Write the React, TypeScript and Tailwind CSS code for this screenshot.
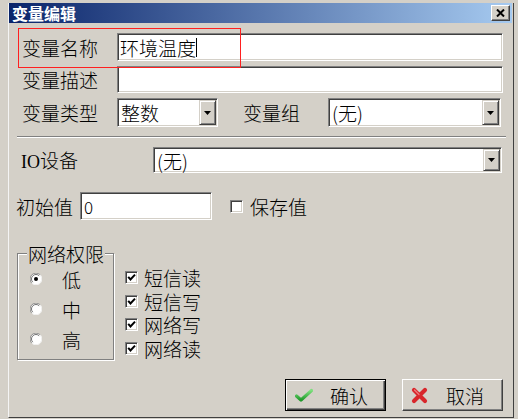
import React from "react";

const sunken =
  "border border-t-[#808080] border-l-[#808080] border-b-white border-r-white bg-white shadow-[inset_1px_1px_0_#404040,inset_-1px_-1px_0_#d4d0c8]";

function DropBtn() {
  return (
    <div className="w-[17px] h-full flex items-center justify-center bg-[#d4d0c8] border border-t-[#d4d0c8] border-l-[#d4d0c8] border-b-[#404040] border-r-[#404040] shadow-[inset_1px_1px_0_#ffffff,inset_-1px_-1px_0_#808080]">
      <svg width="7" height="4" viewBox="0 0 7 4">
        <path d="M0 0H7L3.5 4Z" fill="#000" />
      </svg>
    </div>
  );
}

function Select({ value, className }: { value: string; className: string }) {
  return (
    <div className={`${sunken} ${className} flex items-stretch p-[1px]`}>
      <div className="flex-1 flex items-center pl-[2px] text-[19px] leading-none">{value}</div>
      <DropBtn />
    </div>
  );
}

function Radio({ checked }: { checked?: boolean }) {
  return (
    <svg width="12" height="12" viewBox="0 0 12 12">
      <circle cx="6" cy="6" r="5.5" fill="#fff" />
      <path d="M10.2 1.8A5.5 5.5 0 0 0 1.8 10.2" fill="none" stroke="#909090" strokeWidth="1" />
      <path d="M9.2 2.8A4.2 4.2 0 0 0 2.8 9.2" fill="none" stroke="#505050" strokeWidth="0.8" />
      <path d="M1.8 10.2A5.5 5.5 0 0 0 10.2 1.8" fill="none" stroke="#f4f4f4" strokeWidth="1" />
      {checked && <circle cx="6" cy="6" r="2" fill="#000" />}
    </svg>
  );
}

function Check({ checked }: { checked?: boolean }) {
  return (
    <div className="w-[13px] h-[13px] bg-white border border-t-[#808080] border-l-[#808080] border-b-white border-r-white shadow-[inset_1px_1px_0_#404040,inset_-1px_-1px_0_#d4d0c8] flex items-center justify-center">
      {checked && (
        <svg width="9" height="9" viewBox="0 0 9 9">
          <path d="M1.2 3.8 L3.5 6.5 L8 1.6" fill="none" stroke="#000" strokeWidth="2" />
        </svg>
      )}
    </div>
  );
}

export default function App() {
  return (
    <div className="w-[518px] h-[419px] bg-[#d4d0c8] overflow-hidden pt-[3px] pl-[8px] font-['Noto_Sans_CJK_SC',sans-serif] font-light text-black">
      <div className="w-[506px] h-[415px] border-l border-l-[#f4f4f4] border-r border-r-[#404040] border-b border-b-[#404040] pr-[1px] flex flex-col">
        {/* title bar */}
        <div className="w-[503px] h-[20px] flex items-center justify-between bg-[linear-gradient(90deg,#0a246a,#a6caf0)]">
          <span className="pl-[3px] text-white font-bold text-[16px] leading-none">变量编辑</span>
          <div className="mr-[2px] w-[19px] h-[16px] bg-[#d4d0c8] border border-t-white border-l-white border-b-[#404040] border-r-[#404040] shadow-[inset_-1px_-1px_0_#808080] flex items-center justify-center">
            <svg width="9" height="8" viewBox="0 0 9 8">
              <path d="M1 0.5 L8 7.5 M8 0.5 L1 7.5" stroke="#000" strokeWidth="2" />
            </svg>
          </div>
        </div>

        {/* body */}
        <div className="relative flex flex-col text-[19px] leading-none">
          {/* red annotation box */}
          <div className="absolute left-[9px] top-[5px] w-[223px] h-[40px] border border-[#ff2020] pointer-events-none" />

          {/* row 1 */}
          <div className="mt-[10px] h-[28px] flex items-center">
            <div className="w-[108px] pl-[13px]">变量名称</div>
            <div className={`${sunken} w-[386px] h-full flex items-center pl-[2px]`}>
              <span>环境温度</span>
              <span className="inline-block w-[1px] h-[19px] bg-black" />
            </div>
          </div>

          {/* row 2 */}
          <div className="mt-[5px] h-[27px] flex items-center">
            <div className="w-[108px] pl-[13px]">变量描述</div>
            <div className={`${sunken} w-[386px] h-full`} />
          </div>

          {/* row 3 */}
          <div className="mt-[5px] h-[29px] flex items-center">
            <div className="w-[108px] pl-[13px]">变量类型</div>
            <Select value="整数" className="w-[101px] h-full" />
            <div className="ml-[25px] w-[85px]">变量组</div>
            <Select value="(无)" className="w-[173px] h-full" />
          </div>

          {/* separator */}
          <div className="mt-[9px] ml-[8px] w-[489px] h-[2px] border-t border-t-[#808080] border-b border-b-white" />

          {/* IO row */}
          <div className="mt-[9px] h-[26px] flex items-center">
            <div className="w-[144px] pl-[12px]">
              <span className="font-['Liberation_Serif',serif] font-normal text-[18px]">IO</span>设备
            </div>
            <Select value="(无)" className="w-[349px] h-full" />
          </div>

          {/* initial value row */}
          <div className="mt-[19px] h-[28px] flex items-center">
            <div className="w-[71px] pl-[7px]">初始值</div>
            <div className={`${sunken} w-[132px] h-full flex items-center pl-[3px] text-[17px]`}>0</div>
            <div className="ml-[18px]">
              <Check />
            </div>
            <div className="ml-[7px]">保存值</div>
          </div>

          {/* group row */}
          <div className="mt-[33px] flex items-start">
            <div className="relative ml-[8px] w-[97px] h-[107px] border border-[#808080] shadow-[inset_1px_1px_0_#ffffff,1px_1px_0_#ffffff] pt-[10px]">
              <div className="absolute left-[9px] top-[-10px] bg-[#d4d0c8] px-[1px] leading-[19px]">网络权限</div>
              {[
                ["低", true],
                ["中", false],
                ["高", false],
              ].map(([t, c]) => (
                <div key={t as string} className="h-[30px] flex items-center pl-[12px]">
                  <Radio checked={c as boolean} />
                  <span className="ml-[20px]">{t as string}</span>
                </div>
              ))}
            </div>
            <div className="ml-[11px] mt-[13px] flex flex-col">
              {["短信读", "短信写", "网络写", "网络读"].map((t) => (
                <div key={t} className="h-[23.5px] flex items-center">
                  <Check checked />
                  <span className="ml-[6px] leading-[19px]">{t}</span>
                </div>
              ))}
            </div>
          </div>

          {/* buttons */}
          <div className="mt-[19px] ml-[276px] flex gap-[16px]">
            <div className="w-[101px] h-[32px] border border-black shadow-[inset_1px_1px_0_#ffffff,inset_-1px_-1px_0_#404040,inset_-2px_-2px_0_#808080] bg-[#d4d0c8] flex items-center pl-[9px]">
              <svg width="18" height="14" viewBox="0 0 18 14">
                <defs>
                  <linearGradient id="g" x1="0" y1="0" x2="0" y2="1">
                    <stop offset="0" stopColor="#7ee07e" />
                    <stop offset="1" stopColor="#1f9a2a" />
                  </linearGradient>
                </defs>
                <path d="M1.5 8 L6 12 L16.5 2.5" fill="none" stroke="url(#g)" strokeWidth="3.2" strokeLinecap="round" strokeLinejoin="round" />
              </svg>
              <span className="ml-[17px]">确认</span>
            </div>
            <div className="w-[101px] h-[32px] border border-t-white border-l-white border-b-[#404040] border-r-[#404040] shadow-[inset_-1px_-1px_0_#808080] bg-[#d4d0c8] flex items-center pl-[8px]">
              <svg width="17" height="17" viewBox="0 0 17 17">
                <path d="M3 3 L14 14 M14 3 L3 14" stroke="#d8262b" strokeWidth="4.2" strokeLinecap="round" />
                <path d="M3.5 3 L8 7.5" stroke="#f07a7a" strokeWidth="1.2" strokeLinecap="round" />
              </svg>
              <span className="ml-[18px]">取消</span>
            </div>
          </div>
        </div>
      </div>
    </div>
  );
}
